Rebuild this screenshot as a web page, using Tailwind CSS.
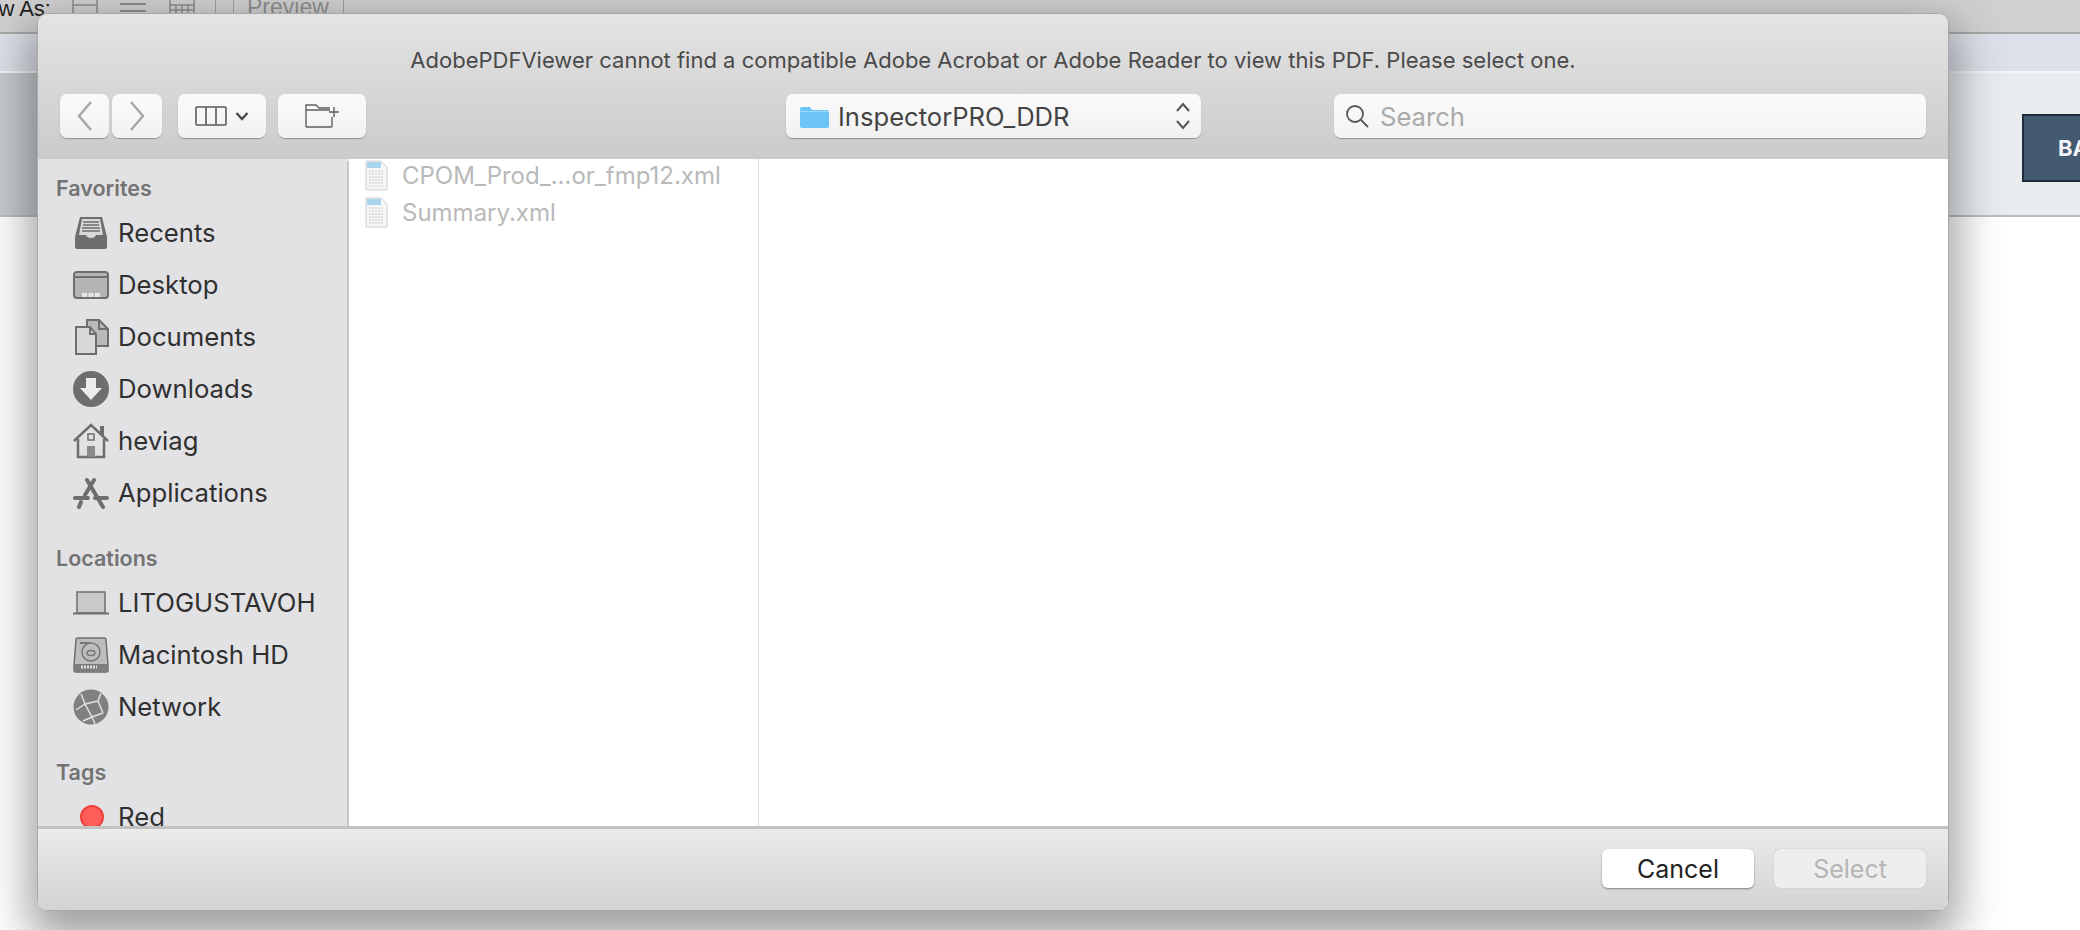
<!DOCTYPE html>
<html lang="en">
<head>
  <meta charset="UTF-8">
  <title>Select PDF reader</title>
  <script src="https://cdn.jsdelivr.net/npm/@tailwindcss/browser@4"></script>
</head>
<body class="font-['Inter',sans-serif] bg-white overflow-hidden">
  <div class="relative w-[2080px] h-[930px] overflow-hidden bg-white">
    <!-- Page behind the dialog -->
    <header class="h-[34px] bg-[#d0d0d0] border-b-2 border-[#a8a8a8] flex items-start overflow-hidden font-['Liberation_Sans',sans-serif]">
      <span class="text-[22px] leading-[22px] text-[#222] ml-[-33px] whitespace-nowrap -mt-[2px]">View As:</span>
      <svg width="26" height="14" viewBox="0 0 26 14" fill="none" stroke="#8c8c8c" stroke-width="1.500" class="ml-[21px] shrink-0"><path d="M1 0v14M25 0v14M1 5h24"/></svg>
      <svg width="26" height="14" viewBox="0 0 26 14" fill="none" stroke="#8c8c8c" stroke-width="2" class="ml-[22px] shrink-0"><path d="M0 4h26M0 11h26"/></svg>
      <svg width="26" height="14" viewBox="0 0 26 14" fill="none" stroke="#8c8c8c" stroke-width="1.500" class="ml-[23px] shrink-0"><path d="M1 0v14M25 0v14M1 5h24M7 5v9M13 5v9M19 5v9M1 10h24"/></svg>
      <span class="ml-[20px] w-px h-[14px] bg-[#a0a0a0] shrink-0"></span>
      <span class="ml-[17px] w-px h-[14px] bg-[#a0a0a0] shrink-0"></span>
      <span class="ml-[13px] text-[23px] leading-[22px] -mt-[4px] text-[#8f8f8f] shrink-0">Preview</span>
      <span class="ml-[14px] w-px h-[14px] bg-[#a0a0a0] shrink-0"></span>
    </header>
    <div class="h-[39px] bg-[#dde0e8] border-b-2 border-[#f4f5f7]"></div>
    <div class="h-[144px] bg-gradient-to-r from-[#c5cbce] via-[#e8ebee] to-[#e9ecef] border-b-2 border-[#b5bec6] flex justify-end items-center">
      <div class="w-[58px] h-[68px] bg-[#435a70] border-2 border-r-0 border-[#1c2a3a] flex items-center pl-[34px] overflow-hidden mt-[8px]">
        <span class="text-[22px] font-bold text-[#f1f4f7]">BA</span>
      </div>
    </div>

    <!-- Open dialog -->
    <div class="absolute left-[37px] top-[13px] w-[1912px] h-[898px] rounded-[10px] overflow-hidden border border-[#a9a9a9] flex flex-col shadow-[0_20px_45px_8px_rgba(0,0,0,0.38)]">
      <div class="h-[145px] shrink-0 bg-gradient-to-b from-[#e4e4e4] to-[#cbcbcb] flex flex-col">
        <p class="h-[80px] pt-[31px] text-center text-[22px] leading-[30px] text-[#4a4a4a]">AdobePDFViewer cannot find a compatible Adobe Acrobat or Adobe Reader to view this PDF. Please select one.</p>
        <div class="flex items-start pl-[22px] pr-[22px] relative">
          <div class="flex gap-[3px]">
            <button class="w-[49px] h-[44px] rounded-[7px] bg-gradient-to-b from-[#fbfbfb] to-[#f1f1f1] shadow-[0_1px_1px_rgba(0,0,0,0.3)] flex items-center justify-center">
              <svg width="16" height="32" viewBox="0 0 16 32" fill="none" stroke="#a5a5a5" stroke-width="2.400"><path d="M14 2 2 16l12 14"/></svg>
            </button>
            <button class="w-[50px] h-[44px] rounded-[7px] bg-gradient-to-b from-[#fbfbfb] to-[#f1f1f1] shadow-[0_1px_1px_rgba(0,0,0,0.3)] flex items-center justify-center">
              <svg width="16" height="32" viewBox="0 0 16 32" fill="none" stroke="#a5a5a5" stroke-width="2.400"><path d="M2 2l12 14L2 30"/></svg>
            </button>
          </div>
          <button class="ml-[16px] w-[88px] h-[44px] rounded-[7px] bg-gradient-to-b from-[#fbfbfb] to-[#f1f1f1] shadow-[0_1px_1px_rgba(0,0,0,0.3)] flex items-center justify-center gap-[8px]">
            <svg width="32" height="20" viewBox="0 0 32 20" fill="none" stroke="#5a5a5a" stroke-width="1.600"><rect x="1" y="1" width="30" height="18" rx="1"/><path d="M11 1v18M21 1v18"/></svg>
            <svg width="14" height="10" viewBox="0 0 14 10" fill="none" stroke="#4a4a4a" stroke-width="2.400"><path d="M1.500 2 7 8l5.500-6"/></svg>
          </button>
          <button class="ml-[12px] w-[88px] h-[44px] rounded-[7px] bg-gradient-to-b from-[#fbfbfb] to-[#f1f1f1] shadow-[0_1px_1px_rgba(0,0,0,0.3)] flex items-center justify-center">
            <svg width="36" height="26" viewBox="0 0 36 26" fill="none" stroke="#5f5f5f" stroke-width="1.400"><path d="M2 24V2h10l3 3h11M28 14v9a1 1 0 0 1-1 1H2M2 7h24M30 4v10M25 9h10"/></svg>
          </button>
          <div class="ml-[420px] w-[415px] h-[44px] rounded-[7px] bg-gradient-to-b from-[#fbfbfb] to-[#f1f1f1] shadow-[0_1px_1px_rgba(0,0,0,0.3)] flex items-center pl-[13px] pr-[10px]">
            <svg width="30" height="24" viewBox="0 0 30 24" class="shrink-0"><path d="M1 5a2 2 0 0 1 2-2h8l2 3h15a2 2 0 0 1 2 2v14a2 2 0 0 1-2 2H3a2 2 0 0 1-2-2z" fill="#6cc4f7"/><rect x="1" y="7" width="29" height="1" fill="#9bd8fa"/></svg>
            <span class="ml-[9px] pt-[2px] text-[25.6px] text-[#444] flex-1">InspectorPRO_DDR</span>
            <svg width="16" height="30" viewBox="0 0 16 30" fill="none" stroke="#555" stroke-width="2"><path d="M2 10l6-7 6 7M2 20l6 7 6-7"/></svg>
          </div>
          <div class="ml-[133px] flex-1 h-[44px] rounded-[7px] bg-gradient-to-b from-[#fbfbfb] to-[#f3f3f3] shadow-[0_1px_1px_rgba(0,0,0,0.3)] flex items-center pl-[10px]">
            <svg width="26" height="26" viewBox="0 0 26 26" fill="none" stroke="#555" stroke-width="1.800"><circle cx="11" cy="11" r="8"/><path d="M17 17l7 7"/></svg>
            <span class="ml-[10px] pt-[2px] text-[25.6px] text-[#a9a9a9]">Search</span>
          </div>
        </div>
      </div>
      <div class="flex-1 min-h-0 flex border-t-2 border-[#e4e4e4]">
        <aside class="w-[311px] shrink-0 bg-[#e2e2e4] border-r-2 border-[#c9c9c9] overflow-hidden pl-[18px] pt-[12px]">
          <h3 class="text-[21.5px] leading-[30px] font-semibold text-[#737373] mb-[4px]">Favorites</h3>
          <ul class="pl-[17px] text-[25.7px] text-[#303030]">
            <li class="h-[52px] flex items-center gap-[9px]">
              <svg width="36" height="34" viewBox="0 0 36 34" class="shrink-0"><path d="M7 1h22l5 20v10a2 2 0 0 1-2 2H4a2 2 0 0 1-2-2V21z" fill="#6e6e6e"/><path d="M9 3h18l3 16H23c-1 4-9 4-10 0H6z" fill="#d8d8d8"/><path d="M10 6h16M10 9h16M9 12h18M9 15h18" stroke="#6e6e6e" stroke-width="1.500"/></svg>
              <span>Recents</span>
            </li>
            <li class="h-[52px] flex items-center gap-[9px]">
              <svg width="36" height="28" viewBox="0 0 36 28" class="shrink-0"><rect x="1" y="1" width="34" height="26" rx="3" fill="#b5b5b5" stroke="#6e6e6e" stroke-width="2"/><path d="M2 6h32" stroke="#6e6e6e" stroke-width="2"/><path d="M9 22h5v4H9zM15.500 22h5v4h-5zM22 22h5v4h-5z" fill="#e8e8e8"/></svg>
              <span>Desktop</span>
            </li>
            <li class="h-[52px] flex items-center gap-[9px]">
              <svg width="36" height="36" viewBox="0 0 36 36" class="shrink-0"><path d="M14 1h12l9 9v17H14z" fill="#b9b9b9" stroke="#6e6e6e" stroke-width="2"/><path d="M3 8h14l6 7v20H3z" fill="#d8d8d8" stroke="#6e6e6e" stroke-width="2"/><path d="M17 8v7h6M26 1v9h9" fill="none" stroke="#6e6e6e" stroke-width="2"/></svg>
              <span>Documents</span>
            </li>
            <li class="h-[52px] flex items-center gap-[9px]">
              <svg width="36" height="36" viewBox="0 0 36 36" class="shrink-0"><circle cx="18" cy="18" r="18" fill="#6e6e6e"/><path d="M13 7h10v10h6L18 29 7 17h6z" fill="#ececec"/></svg>
              <span>Downloads</span>
            </li>
            <li class="h-[52px] flex items-center gap-[9px]">
              <svg width="36" height="36" viewBox="0 0 36 36" class="shrink-0"><path d="M5 16v18h26V16" fill="none" stroke="#6e6e6e" stroke-width="2.500"/><path d="M1 18 18 2l17 16" fill="none" stroke="#6e6e6e" stroke-width="2.500"/><path d="M27 3h4v10l-4-4z" fill="#6e6e6e"/><rect x="15" y="11" width="6" height="6" fill="none" stroke="#6e6e6e" stroke-width="1.500"/><rect x="14" y="23" width="8" height="11" fill="#8a8a8a"/></svg>
              <span>heviag</span>
            </li>
            <li class="h-[52px] flex items-center gap-[9px]">
              <svg width="36" height="32" viewBox="0 0 36 32" class="shrink-0" fill="none" stroke="#6e6e6e" stroke-width="4" stroke-linecap="round"><path d="M14 3l16 27M21 3l-9 15M8 25l-2 5M2 21h13M22 21h12"/></svg>
              <span>Applications</span>
            </li>
          </ul>
          <h3 class="mt-[24px] text-[21.5px] leading-[30px] font-semibold text-[#737373] mb-[4px]">Locations</h3>
          <ul class="pl-[17px] text-[25.7px] text-[#303030]">
            <li class="h-[52px] flex items-center gap-[9px]">
              <svg width="36" height="24" viewBox="0 0 36 24" class="shrink-0"><path d="M4 1h28v21H4z" fill="#c9c9c9" stroke="#6e6e6e" stroke-width="1.500"/><path d="M0 22.500h36" stroke="#6e6e6e" stroke-width="2"/></svg>
              <span>LITOGUSTAVOH</span>
            </li>
            <li class="h-[52px] flex items-center gap-[9px]">
              <svg width="36" height="36" viewBox="0 0 36 36" class="shrink-0"><path d="M5 1h26a2 2 0 0 1 2 2l2 25v5a2 2 0 0 1-2 2H3a2 2 0 0 1-2-2v-5L3 3a2 2 0 0 1 2-2z" fill="#bdbdbd" stroke="#6e6e6e" stroke-width="1.500"/><path d="M1 27h34v6a2 2 0 0 1-2 2H3a2 2 0 0 1-2-2z" fill="#7d7d7d"/><circle cx="18" cy="15" r="9" fill="none" stroke="#777" stroke-width="1.500"/><ellipse cx="18" cy="16" rx="4" ry="2.500" fill="none" stroke="#777" stroke-width="1.500"/><path d="M7 6h10" stroke="#777" stroke-width="2"/><path d="M8 30h16" stroke="#ddd" stroke-width="3" stroke-dasharray="2 1"/></svg>
              <span>Macintosh HD</span>
            </li>
            <li class="h-[52px] flex items-center gap-[9px]">
              <svg width="36" height="36" viewBox="0 0 36 36" class="shrink-0"><circle cx="18" cy="18" r="17.500" fill="#808080"/><path d="M8 5l4 10-9 6M12 15l13-3 3-8M25 12l5 12M12 15l7 13 11-4M19 28l-9 4M19 28l3 7" fill="none" stroke="#e0e0e0" stroke-width="1.500"/></svg>
              <span>Network</span>
            </li>
          </ul>
          <h3 class="mt-[24px] text-[21.5px] leading-[30px] font-semibold text-[#737373] mb-[4px]">Tags</h3>
          <ul class="pl-[24px] text-[25.7px] text-[#303030]">
            <li class="h-[52px] flex items-center gap-[14px]">
              <span class="w-[24px] h-[24px] rounded-full bg-[#ff5e5b] border-2 border-[#ee3f3b]"></span>
              <span>Red</span>
            </li>
          </ul>
        </aside>
        <div class="w-[410px] shrink-0 bg-white border-r border-[#dcdcdc] overflow-hidden -mt-[2px] pl-[16px] text-[24px] text-[#b9b9b9]">
          <div class="h-[37px] -mt-[2px] flex items-center gap-[14px]">
            <svg width="23" height="31" viewBox="0 0 23 31" class="shrink-0"><path d="M1 1h15l6 6v23H1z" fill="#f6f6f6" stroke="#cfcfcf"/><rect x="2" y="2" width="14" height="6" fill="#a9d4ee"/><path d="M4 11h15M4 14h15M4 17h15M4 20h15M4 23h15M4 26h15" stroke="#c9c9c9" stroke-dasharray="2 1"/></svg>
            <span>CPOM_Prod_...or_fmp12.xml</span>
          </div>
          <div class="h-[37px] flex items-center gap-[14px]">
            <svg width="23" height="31" viewBox="0 0 23 31" class="shrink-0"><path d="M1 1h15l6 6v23H1z" fill="#f6f6f6" stroke="#cfcfcf"/><rect x="2" y="2" width="14" height="6" fill="#a9d4ee"/><path d="M4 11h15M4 14h15M4 17h15M4 20h15M4 23h15M4 26h15" stroke="#c9c9c9" stroke-dasharray="2 1"/></svg>
            <span>Summary.xml</span>
          </div>
        </div>
        <div class="flex-1 bg-white -mt-[2px]"></div>
      </div>
      <div class="h-[84px] shrink-0 border-t-[3px] border-[#c2c2c2] bg-gradient-to-b from-[#ebebeb] to-[#d3d3d3] flex justify-end items-start pt-[20px] pr-[22px] gap-[20px]">
        <button class="w-[152px] h-[39px] rounded-[6px] bg-white shadow-[0_1px_2px_rgba(0,0,0,0.4)] text-[25px] text-[#222] leading-[39px] pt-[1px]">Cancel</button>
        <button class="w-[152px] h-[39px] rounded-[6px] bg-[#eeeeee] shadow-[0_0_1px_rgba(0,0,0,0.35)] text-[25px] text-[#b5b5b5] leading-[39px] pt-[1px]">Select</button>
      </div>
    </div>
  </div>
</body>
</html>
